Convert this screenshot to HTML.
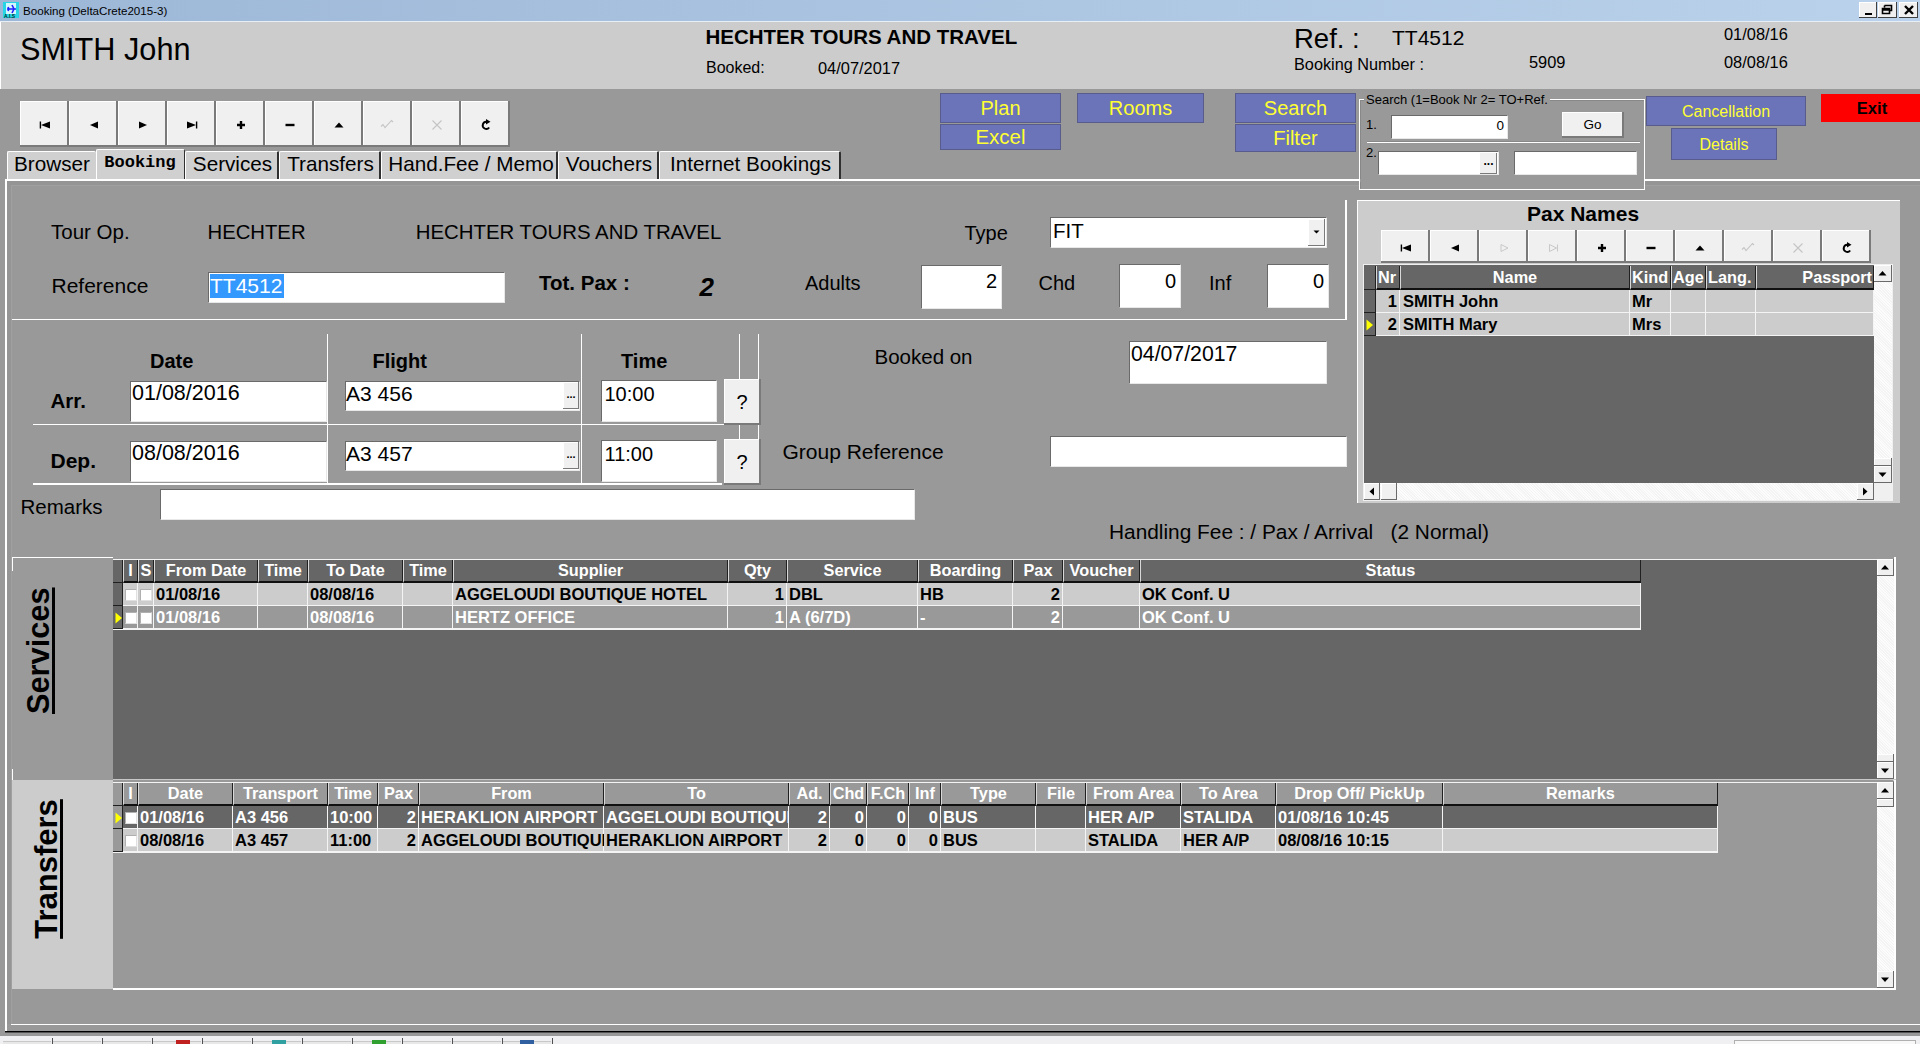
<!DOCTYPE html>
<html><head><meta charset="utf-8"><title>Booking</title>
<style>
html,body{margin:0;padding:0;width:1920px;height:1044px;overflow:hidden;background:#999;}
body>div,body>svg{position:absolute;}
body div div{position:absolute;}
</style></head><body>
<div style="left:0px;top:0px;width:1920px;height:1044px;background:#999999"></div>
<div style="left:0px;top:0px;width:1920px;height:21px;background:linear-gradient(to right,#9db7d7,#bad2eb)"></div>
<div style="left:0px;top:21px;width:1920px;height:1px;background:#e8eef6"></div>
<svg style="position:absolute;left:3px;top:2px" width="16" height="16" viewBox="0 0 16 16"><rect x="0" y="0" width="16" height="16" fill="#27d5e6"/><rect x="3" y="1" width="10" height="11" fill="#ffffff" opacity="0.8"/><path d="M4 7 L13 7 M9 3 L11 7 L9 11 M5 5 L6 7 L5 9" stroke="#2020ff" stroke-width="1.6" fill="none"/><text x="1" y="15.5" font-size="5" font-family="Liberation Sans" font-weight="700" fill="#003030">A.I.S</text></svg>
<div style="top:5.18px;font:400 11.6px/11.6px 'Liberation Sans',sans-serif;color:#000;white-space:pre;left:23px;">Booking (DeltaCrete2015-3)</div>
<div style="left:1859px;top:2px;width:18px;height:16px;background:#f0f0f0;border-right:1px solid #404040;border-bottom:1px solid #404040;box-sizing:border-box;box-shadow:inset 1px 1px 0 #fff"></div>
<div style="left:1878px;top:2px;width:19px;height:16px;background:#f0f0f0;border-right:1px solid #404040;border-bottom:1px solid #404040;box-sizing:border-box;box-shadow:inset 1px 1px 0 #fff"></div>
<div style="left:1899px;top:2px;width:19px;height:16px;background:#f0f0f0;border-right:1px solid #404040;border-bottom:1px solid #404040;box-sizing:border-box;box-shadow:inset 1px 1px 0 #fff"></div>
<div style="left:1864.5px;top:13px;width:7.0px;height:2px;background:#000"></div>
<svg style="position:absolute;left:1878px;top:2px" width="19" height="16" viewBox="0 0 19 16"><path d="M6.5 3.5h7v5h-2M6.5 3.5v2M4.5 6.5h7v5h-7z M4.5 6.5v1.5h7" stroke="#000" stroke-width="1.6" fill="none"/></svg>
<svg style="position:absolute;left:1899px;top:2px" width="20" height="16" viewBox="0 0 20 16"><path d="M6 4L14 12M14 4L6 12" stroke="#000" stroke-width="2.4"/></svg>
<div style="left:0px;top:22px;width:1920px;height:67px;background:#cccccc"></div>
<div style="left:0px;top:22px;width:1px;height:67px;background:#fff"></div>
<div style="top:35.01px;font:400 30.7px/30.7px 'Liberation Sans',sans-serif;color:#000;white-space:pre;left:20px;">SMITH John</div>
<div style="top:26.65px;font:700 20.5px/20.5px 'Liberation Sans',sans-serif;color:#000;white-space:pre;left:705.5px;">HECHTER TOURS AND TRAVEL</div>
<div style="top:60.46px;font:400 16px/16px 'Liberation Sans',sans-serif;color:#000;white-space:pre;left:706px;">Booked:</div>
<div style="top:60.12px;font:400 16.4px/16.4px 'Liberation Sans',sans-serif;color:#000;white-space:pre;left:818px;">04/07/2017</div>
<div style="top:24.72px;font:400 27.5px/27.5px 'Liberation Sans',sans-serif;color:#000;white-space:pre;left:1294px;">Ref. :</div>
<div style="top:26.72px;font:400 21px/21px 'Liberation Sans',sans-serif;color:#000;white-space:pre;left:1392px;">TT4512</div>
<div style="top:56.24px;font:400 16.25px/16.25px 'Liberation Sans',sans-serif;color:#000;white-space:pre;left:1294px;">Booking Number :</div>
<div style="top:54.12px;font:400 16.4px/16.4px 'Liberation Sans',sans-serif;color:#000;white-space:pre;left:1529px;">5909</div>
<div style="top:25.62px;font:400 16.4px/16.4px 'Liberation Sans',sans-serif;color:#000;white-space:pre;left:1724px;">01/08/16</div>
<div style="top:53.62px;font:400 16.4px/16.4px 'Liberation Sans',sans-serif;color:#000;white-space:pre;left:1724px;">08/08/16</div>
<div style="left:20px;top:101px;width:49px;height:46px;background:#f0f0f0;box-sizing:border-box;border-right:2px solid #7a7a7a;border-bottom:2px solid #7a7a7a;box-shadow:inset 1px 1px 0 #ffffff"></div>
<svg style="position:absolute;left:34.5px;top:114.5px" width="20" height="20" viewBox="-10 -10 20 20"><path d="M-4.6 -3.5v7" stroke="#000" stroke-width="1.4"/><path d="M-4 0L5 -3.6v7.2z" fill="#000"/></svg>
<div style="left:69px;top:101px;width:49px;height:46px;background:#f0f0f0;box-sizing:border-box;border-right:2px solid #7a7a7a;border-bottom:2px solid #7a7a7a;box-shadow:inset 1px 1px 0 #ffffff"></div>
<svg style="position:absolute;left:83.5px;top:114.5px" width="20" height="20" viewBox="-10 -10 20 20"><path d="M-4 0L4 -3.6v7.2z" fill="#000"/></svg>
<div style="left:118px;top:101px;width:49px;height:46px;background:#f0f0f0;box-sizing:border-box;border-right:2px solid #7a7a7a;border-bottom:2px solid #7a7a7a;box-shadow:inset 1px 1px 0 #ffffff"></div>
<svg style="position:absolute;left:132.5px;top:114.5px" width="20" height="20" viewBox="-10 -10 20 20"><path d="M4 0L-4 -3.6v7.2z" fill="#000"/></svg>
<div style="left:167px;top:101px;width:49px;height:46px;background:#f0f0f0;box-sizing:border-box;border-right:2px solid #7a7a7a;border-bottom:2px solid #7a7a7a;box-shadow:inset 1px 1px 0 #ffffff"></div>
<svg style="position:absolute;left:181.5px;top:114.5px" width="20" height="20" viewBox="-10 -10 20 20"><path d="M4.6 -3.5v7" stroke="#000" stroke-width="1.4"/><path d="M4 0L-5 -3.6v7.2z" fill="#000"/></svg>
<div style="left:216px;top:101px;width:49px;height:46px;background:#f0f0f0;box-sizing:border-box;border-right:2px solid #7a7a7a;border-bottom:2px solid #7a7a7a;box-shadow:inset 1px 1px 0 #ffffff"></div>
<svg style="position:absolute;left:230.5px;top:114.5px" width="20" height="20" viewBox="-10 -10 20 20"><path d="M-4 0h8M0 -4v8" stroke="#000" stroke-width="2.4"/></svg>
<div style="left:265px;top:101px;width:49px;height:46px;background:#f0f0f0;box-sizing:border-box;border-right:2px solid #7a7a7a;border-bottom:2px solid #7a7a7a;box-shadow:inset 1px 1px 0 #ffffff"></div>
<svg style="position:absolute;left:279.5px;top:114.5px" width="20" height="20" viewBox="-10 -10 20 20"><path d="M-4.5 0h9" stroke="#000" stroke-width="2.4"/></svg>
<div style="left:314px;top:101px;width:49px;height:46px;background:#f0f0f0;box-sizing:border-box;border-right:2px solid #7a7a7a;border-bottom:2px solid #7a7a7a;box-shadow:inset 1px 1px 0 #ffffff"></div>
<svg style="position:absolute;left:328.5px;top:114.5px" width="20" height="20" viewBox="-10 -10 20 20"><path d="M-4.5 2.5L0 -2.5L4.5 2.5z" fill="#000"/></svg>
<div style="left:363px;top:101px;width:49px;height:46px;background:#f0f0f0;box-sizing:border-box;border-right:2px solid #7a7a7a;border-bottom:2px solid #7a7a7a;box-shadow:inset 1px 1px 0 #ffffff"></div>
<svg style="position:absolute;left:377.5px;top:114.5px" width="20" height="20" viewBox="-10 -10 20 20"><path d="M-7 1.5L-5 -0.5L-3 2.5L3.5 -4.5L5 -3" stroke="#c4c4c4" stroke-width="1.1" fill="none"/></svg>
<div style="left:412px;top:101px;width:49px;height:46px;background:#f0f0f0;box-sizing:border-box;border-right:2px solid #7a7a7a;border-bottom:2px solid #7a7a7a;box-shadow:inset 1px 1px 0 #ffffff"></div>
<svg style="position:absolute;left:426.5px;top:114.5px" width="20" height="20" viewBox="-10 -10 20 20"><path d="M-4.5 -4.5L4.5 4.5M4.5 -4.5L-4.5 4.5" stroke="#c4c4c4" stroke-width="1.1"/></svg>
<div style="left:461px;top:101px;width:49px;height:46px;background:#f0f0f0;box-sizing:border-box;border-right:2px solid #7a7a7a;border-bottom:2px solid #7a7a7a;box-shadow:inset 1px 1px 0 #ffffff"></div>
<svg style="position:absolute;left:475.5px;top:114.5px" width="20" height="20" viewBox="-10 -10 20 20"><path d="M1 -3.2A3.6 3.6 0 1 0 3.2 2.5" stroke="#000" stroke-width="1.9" fill="none"/><path d="M0 -6L4.5 -3.2L0 -0.5z" fill="#000"/></svg>
<div style="left:940px;top:93px;width:121px;height:30px;background:#6b74b8;box-sizing:border-box;border:1px solid #585c8c"></div>
<div style="top:98.37px;font:400 20px/20px 'Liberation Sans',sans-serif;color:#ffff33;white-space:pre;left:500.5px;width:1000px;text-align:center;">Plan</div>
<div style="left:940px;top:124px;width:121px;height:26px;background:#6b74b8;box-sizing:border-box;border:1px solid #585c8c"></div>
<div style="top:126.65px;font:400 20.5px/20.5px 'Liberation Sans',sans-serif;color:#ffff33;white-space:pre;left:500.5px;width:1000px;text-align:center;">Excel</div>
<div style="left:1077px;top:93px;width:127px;height:30px;background:#6b74b8;box-sizing:border-box;border:1px solid #585c8c"></div>
<div style="top:98.37px;font:400 20px/20px 'Liberation Sans',sans-serif;color:#ffff33;white-space:pre;left:640.5px;width:1000px;text-align:center;">Rooms</div>
<div style="left:1235px;top:93px;width:121px;height:30px;background:#6b74b8;box-sizing:border-box;border:1px solid #585c8c"></div>
<div style="top:98.37px;font:400 20px/20px 'Liberation Sans',sans-serif;color:#ffff33;white-space:pre;left:795.5px;width:1000px;text-align:center;">Search</div>
<div style="left:1235px;top:124px;width:121px;height:28px;background:#6b74b8;box-sizing:border-box;border:1px solid #585c8c"></div>
<div style="top:128.07px;font:400 20px/20px 'Liberation Sans',sans-serif;color:#ffff33;white-space:pre;left:795.5px;width:1000px;text-align:center;">Filter</div>
<div style="left:1646px;top:96px;width:160px;height:30px;background:#6b74b8;box-sizing:border-box;border:1px solid #585c8c"></div>
<div style="top:104.46px;font:400 16px/16px 'Liberation Sans',sans-serif;color:#ffff33;white-space:pre;left:1226.0px;width:1000px;text-align:center;">Cancellation</div>
<div style="left:1671px;top:128px;width:106px;height:32px;background:#6b74b8;box-sizing:border-box;border:1px solid #585c8c"></div>
<div style="top:136.96px;font:400 16px/16px 'Liberation Sans',sans-serif;color:#ffff33;white-space:pre;left:1224.0px;width:1000px;text-align:center;">Details</div>
<div style="left:1821px;top:94px;width:99px;height:28px;background:#ff0000;box-sizing:border-box;border:1px solid #ff0000"></div>
<div style="top:100.03px;font:700 16.5px/16.5px 'Liberation Sans',sans-serif;color:#000;white-space:pre;left:1372.0px;width:1000px;text-align:center;">Exit</div>
<div style="left:1359px;top:99px;width:286px;height:91px;background:#999;box-sizing:border-box;border:1px solid #ffffff;box-shadow:inset 1px 1px 0 #888"></div>
<div style="left:1364px;top:92px;width:186px;height:14px;background:#999999"></div>
<div style="top:92.60px;font:400 13px/13px 'Liberation Sans',sans-serif;color:#000;white-space:pre;left:1366px;">Search (1=Book Nr 2= TO+Ref.</div>
<div style="top:117.50px;font:400 13px/13px 'Liberation Sans',sans-serif;color:#000;white-space:pre;left:1366px;">1.</div>
<div style="left:1391px;top:115px;width:117px;height:24px;background:#fff;box-sizing:border-box;border-top:1px solid #6a6a6a;border-left:1px solid #6a6a6a;border-bottom:1px solid #e8e8e8;border-right:1px solid #e8e8e8;"></div>
<div style="top:118.57px;font:400 13.5px/13.5px 'Liberation Sans',sans-serif;color:#000;white-space:pre;right:416px;">0</div>
<div style="left:1562px;top:112px;width:62px;height:26px;background:#f0f0f0;box-sizing:border-box;border-right:2px solid #7a7a7a;border-bottom:2px solid #7a7a7a;box-shadow:inset 1px 1px 0 #fff"></div>
<div style="top:117.57px;font:400 13.5px/13.5px 'Liberation Sans',sans-serif;color:#000;white-space:pre;left:1092.5px;width:1000px;text-align:center;">Go</div>
<div style="left:1367px;top:141px;width:273px;height:2px;background:#fff;border-top:1px solid #888;box-sizing:border-box"></div>
<div style="top:146.00px;font:400 13px/13px 'Liberation Sans',sans-serif;color:#000;white-space:pre;left:1366px;">2.</div>
<div style="left:1378px;top:151px;width:121px;height:24px;background:#fff;box-sizing:border-box;border-top:1px solid #6a6a6a;border-left:1px solid #6a6a6a;border-bottom:1px solid #e8e8e8;border-right:1px solid #e8e8e8;"></div>
<div style="left:1480px;top:153px;width:17px;height:21px;background:#f0f0f0;box-sizing:border-box;border-right:1px solid #7a7a7a;border-bottom:1px solid #7a7a7a"></div>
<div style="top:154.84px;font:700 12px/12px 'Liberation Sans',sans-serif;color:#000;white-space:pre;left:988.5px;width:1000px;text-align:center;">...</div>
<div style="left:1514px;top:151px;width:123px;height:24px;background:#fff;box-sizing:border-box;border-top:1px solid #6a6a6a;border-left:1px solid #6a6a6a;border-bottom:1px solid #e8e8e8;border-right:1px solid #e8e8e8;"></div>
<div style="left:7px;top:151px;width:89px;height:28px;background:#d0d0d0;box-sizing:border-box;border-top:1px solid #fff;border-left:1px solid #fff;border-radius:2px 2px 0 0"></div>
<div style="top:154.48px;font:400 20.7px/20.7px 'Liberation Sans',sans-serif;color:#000;white-space:pre;left:-448.0px;width:1000px;text-align:center;">Browser</div>
<div style="left:185px;top:151px;width:94px;height:28px;background:#d0d0d0;box-sizing:border-box;border-top:1px solid #fff;border-left:1px solid #fff;border-right:2px solid #303030;border-radius:2px 2px 0 0"></div>
<div style="top:154.48px;font:400 20.7px/20.7px 'Liberation Sans',sans-serif;color:#000;white-space:pre;left:-267.5px;width:1000px;text-align:center;">Services</div>
<div style="left:279px;top:151px;width:102px;height:28px;background:#d0d0d0;box-sizing:border-box;border-top:1px solid #fff;border-left:1px solid #fff;border-right:2px solid #303030;border-radius:2px 2px 0 0"></div>
<div style="top:154.48px;font:400 20.7px/20.7px 'Liberation Sans',sans-serif;color:#000;white-space:pre;left:-169.5px;width:1000px;text-align:center;">Transfers</div>
<div style="left:381px;top:151px;width:177px;height:28px;background:#d0d0d0;box-sizing:border-box;border-top:1px solid #fff;border-left:1px solid #fff;border-right:2px solid #303030;border-radius:2px 2px 0 0"></div>
<div style="top:154.48px;font:400 20.7px/20.7px 'Liberation Sans',sans-serif;color:#000;white-space:pre;left:-29.0px;width:1000px;text-align:center;">Hand.Fee / Memo</div>
<div style="left:558px;top:151px;width:101px;height:28px;background:#d0d0d0;box-sizing:border-box;border-top:1px solid #fff;border-left:1px solid #fff;border-right:2px solid #303030;border-radius:2px 2px 0 0"></div>
<div style="top:154.48px;font:400 20.7px/20.7px 'Liberation Sans',sans-serif;color:#000;white-space:pre;left:109.0px;width:1000px;text-align:center;">Vouchers</div>
<div style="left:659px;top:151px;width:182px;height:28px;background:#d0d0d0;box-sizing:border-box;border-top:1px solid #fff;border-left:1px solid #fff;border-right:2px solid #303030;border-radius:2px 2px 0 0"></div>
<div style="top:154.48px;font:400 20.7px/20.7px 'Liberation Sans',sans-serif;color:#000;white-space:pre;left:250.5px;width:1000px;text-align:center;">Internet Bookings</div>
<div style="left:96px;top:149px;width:89px;height:30px;background:#d0d0d0;box-sizing:border-box;border-top:1px solid #fff;border-left:1px solid #fff;border-right:1px solid #303030;border-radius:2px 2px 0 0"></div>
<div style="top:154.33px;font:700 17px/17px 'Liberation Mono',monospace;color:#000;white-space:pre;left:-360px;width:1000px;text-align:center;">Booking</div>
<div style="left:5px;top:179px;width:1915px;height:2px;background:#fff"></div>
<div style="left:1360px;top:179px;width:284px;height:3px;background:#999"></div>
<div style="left:5px;top:180px;width:2px;height:851px;background:#fff"></div>
<div style="left:7px;top:181px;width:1352px;height:4px;background:#959595"></div>
<div style="left:1645px;top:181px;width:275px;height:4px;background:#959595"></div>
<div style="left:7px;top:181px;width:4px;height:843px;background:#959595"></div>
<div style="left:11px;top:185px;width:1348px;height:1px;background:#a0a0a0"></div>
<div style="left:1645px;top:185px;width:275px;height:1px;background:#a0a0a0"></div>
<div style="left:11px;top:185px;width:1px;height:839px;background:#a0a0a0"></div>
<div style="left:1345px;top:200px;width:2px;height:120px;background:#fff"></div>
<div style="left:12px;top:319px;width:1335px;height:1px;background:#fff"></div>
<div style="top:221.65px;font:400 20.5px/20.5px 'Liberation Sans',sans-serif;color:#000;white-space:pre;left:51px;">Tour Op.</div>
<div style="top:221.82px;font:400 20.3px/20.3px 'Liberation Sans',sans-serif;color:#000;white-space:pre;left:207.5px;">HECHTER</div>
<div style="top:222.23px;font:400 20.4px/20.4px 'Liberation Sans',sans-serif;color:#000;white-space:pre;left:415.7px;">HECHTER TOURS AND TRAVEL</div>
<div style="top:223.07px;font:400 20px/20px 'Liberation Sans',sans-serif;color:#000;white-space:pre;left:964.5px;">Type</div>
<div style="left:1050px;top:217px;width:277px;height:31px;background:#fff;box-sizing:border-box;border-top:1px solid #6a6a6a;border-left:1px solid #6a6a6a;border-bottom:1px solid #e8e8e8;border-right:1px solid #e8e8e8;"></div>
<div style="left:1308px;top:219px;width:17px;height:27px;background:#f0f0f0;box-sizing:border-box;border-right:1px solid #7a7a7a;border-bottom:1px solid #7a7a7a;box-shadow:inset 1px 1px 0 #fff"></div>
<svg style="position:absolute;left:1312px;top:228px" width="10" height="8"><path d="M1.5 2.5h6L4.5 5.5z" fill="#000"/></svg>
<div style="top:220.65px;font:400 20.5px/20.5px 'Liberation Sans',sans-serif;color:#000;white-space:pre;left:1053px;">FIT</div>
<div style="top:275.22px;font:400 21px/21px 'Liberation Sans',sans-serif;color:#000;white-space:pre;left:51.5px;">Reference</div>
<div style="left:208px;top:272px;width:297px;height:31px;background:#fff;box-sizing:border-box;border-top:1px solid #6a6a6a;border-left:1px solid #6a6a6a;border-bottom:1px solid #e8e8e8;border-right:1px solid #e8e8e8;"></div>
<div style="left:210px;top:274px;width:74px;height:24px;background:#3399ff"></div>
<div style="top:274.72px;font:400 21px/21px 'Liberation Sans',sans-serif;color:#fff;white-space:pre;left:210px;">TT4512</div>
<div style="top:272.65px;font:700 20.5px/20.5px 'Liberation Sans',sans-serif;color:#000;white-space:pre;left:539px;">Tot. Pax :</div>
<div style="top:274.49px;font:700 26px/26px 'Liberation Sans',sans-serif;color:#000;white-space:pre;left:699.5px;font-style:italic;">2</div>
<div style="top:273.07px;font:400 20px/20px 'Liberation Sans',sans-serif;color:#000;white-space:pre;left:805px;">Adults</div>
<div style="left:921px;top:265px;width:81px;height:44px;background:#fff;box-sizing:border-box;border-top:1px solid #6a6a6a;border-left:1px solid #6a6a6a;border-bottom:1px solid #e8e8e8;border-right:1px solid #e8e8e8;"></div>
<div style="top:270.57px;font:400 20px/20px 'Liberation Sans',sans-serif;color:#000;white-space:pre;right:923px;">2</div>
<div style="top:273.07px;font:400 20px/20px 'Liberation Sans',sans-serif;color:#000;white-space:pre;left:1038.5px;">Chd</div>
<div style="left:1119px;top:264px;width:62px;height:44px;background:#fff;box-sizing:border-box;border-top:1px solid #6a6a6a;border-left:1px solid #6a6a6a;border-bottom:1px solid #e8e8e8;border-right:1px solid #e8e8e8;"></div>
<div style="top:270.57px;font:400 20px/20px 'Liberation Sans',sans-serif;color:#000;white-space:pre;right:744px;">0</div>
<div style="top:273.07px;font:400 20px/20px 'Liberation Sans',sans-serif;color:#000;white-space:pre;left:1209px;">Inf</div>
<div style="left:1267px;top:264px;width:62px;height:44px;background:#fff;box-sizing:border-box;border-top:1px solid #6a6a6a;border-left:1px solid #6a6a6a;border-bottom:1px solid #e8e8e8;border-right:1px solid #e8e8e8;"></div>
<div style="top:270.57px;font:400 20px/20px 'Liberation Sans',sans-serif;color:#000;white-space:pre;right:596px;">0</div>
<div style="left:327px;top:334px;width:1px;height:151px;background:#fff"></div>
<div style="left:581px;top:334px;width:1px;height:151px;background:#fff"></div>
<div style="left:739px;top:334px;width:1px;height:46px;background:#fff"></div>
<div style="left:739px;top:424px;width:1px;height:16px;background:#fff"></div>
<div style="left:758px;top:334px;width:1px;height:46px;background:#fff"></div>
<div style="left:758px;top:424px;width:1px;height:16px;background:#fff"></div>
<div style="left:33px;top:424px;width:707px;height:1px;background:#fff"></div>
<div style="left:33px;top:483px;width:689px;height:2px;background:#fff"></div>
<div style="top:351.07px;font:700 20px/20px 'Liberation Sans',sans-serif;color:#000;white-space:pre;left:150px;">Date</div>
<div style="top:351.07px;font:700 20px/20px 'Liberation Sans',sans-serif;color:#000;white-space:pre;left:372.5px;">Flight</div>
<div style="top:351.07px;font:700 20px/20px 'Liberation Sans',sans-serif;color:#000;white-space:pre;left:621px;">Time</div>
<div style="top:390.65px;font:700 20.5px/20.5px 'Liberation Sans',sans-serif;color:#000;white-space:pre;left:50.5px;">Arr.</div>
<div style="top:450.22px;font:700 21px/21px 'Liberation Sans',sans-serif;color:#000;white-space:pre;left:50.5px;">Dep.</div>
<div style="left:130px;top:381px;width:197px;height:41px;background:#fff;box-sizing:border-box;border-top:1px solid #6a6a6a;border-left:1px solid #6a6a6a;border-bottom:1px solid #e8e8e8;border-right:1px solid #e8e8e8;"></div>
<div style="top:382.80px;font:400 21.5px/21.5px 'Liberation Sans',sans-serif;color:#000;white-space:pre;left:132px;">01/08/2016</div>
<div style="left:130px;top:441px;width:197px;height:41px;background:#fff;box-sizing:border-box;border-top:1px solid #6a6a6a;border-left:1px solid #6a6a6a;border-bottom:1px solid #e8e8e8;border-right:1px solid #e8e8e8;"></div>
<div style="top:442.80px;font:400 21.5px/21.5px 'Liberation Sans',sans-serif;color:#000;white-space:pre;left:132px;">08/08/2016</div>
<div style="left:345px;top:381px;width:235px;height:30px;background:#fff;box-sizing:border-box;border-top:1px solid #6a6a6a;border-left:1px solid #6a6a6a;border-bottom:1px solid #e8e8e8;border-right:1px solid #e8e8e8;"></div>
<div style="left:563px;top:382px;width:16px;height:27px;background:#f0f0f0;box-sizing:border-box;border-right:1px solid #7a7a7a;border-bottom:1px solid #7a7a7a;box-shadow:inset 1px 1px 0 #fff"></div>
<div style="top:389.19px;font:700 11px/11px 'Liberation Sans',sans-serif;color:#000;white-space:pre;left:71.0px;width:1000px;text-align:center;">...</div>
<div style="top:383.22px;font:400 21px/21px 'Liberation Sans',sans-serif;color:#000;white-space:pre;left:346px;">A3 456</div>
<div style="left:345px;top:441px;width:235px;height:30px;background:#fff;box-sizing:border-box;border-top:1px solid #6a6a6a;border-left:1px solid #6a6a6a;border-bottom:1px solid #e8e8e8;border-right:1px solid #e8e8e8;"></div>
<div style="left:563px;top:442px;width:16px;height:27px;background:#f0f0f0;box-sizing:border-box;border-right:1px solid #7a7a7a;border-bottom:1px solid #7a7a7a;box-shadow:inset 1px 1px 0 #fff"></div>
<div style="top:449.19px;font:700 11px/11px 'Liberation Sans',sans-serif;color:#000;white-space:pre;left:71.0px;width:1000px;text-align:center;">...</div>
<div style="top:443.22px;font:400 21px/21px 'Liberation Sans',sans-serif;color:#000;white-space:pre;left:346px;">A3 457</div>
<div style="left:601px;top:380px;width:116px;height:42px;background:#fff;box-sizing:border-box;border-top:1px solid #6a6a6a;border-left:1px solid #6a6a6a;border-bottom:1px solid #e8e8e8;border-right:1px solid #e8e8e8;"></div>
<div style="top:384.07px;font:400 20px/20px 'Liberation Sans',sans-serif;color:#000;white-space:pre;left:604.5px;">10:00</div>
<div style="left:601px;top:440px;width:116px;height:42px;background:#fff;box-sizing:border-box;border-top:1px solid #6a6a6a;border-left:1px solid #6a6a6a;border-bottom:1px solid #e8e8e8;border-right:1px solid #e8e8e8;"></div>
<div style="top:444.07px;font:400 20px/20px 'Liberation Sans',sans-serif;color:#000;white-space:pre;left:604.5px;">11:00</div>
<div style="left:724px;top:379px;width:37px;height:46px;background:#f0f0f0;box-sizing:border-box;border-right:2px solid #7a7a7a;border-bottom:2px solid #7a7a7a;box-shadow:inset 1px 1px 0 #fff"></div>
<div style="top:391.57px;font:400 20px/20px 'Liberation Sans',sans-serif;color:#000;white-space:pre;left:242.0px;width:1000px;text-align:center;">?</div>
<div style="left:724px;top:439px;width:37px;height:46px;background:#f0f0f0;box-sizing:border-box;border-right:2px solid #7a7a7a;border-bottom:2px solid #7a7a7a;box-shadow:inset 1px 1px 0 #fff"></div>
<div style="top:451.57px;font:400 20px/20px 'Liberation Sans',sans-serif;color:#000;white-space:pre;left:242.0px;width:1000px;text-align:center;">?</div>
<div style="top:347.15px;font:400 20.5px/20.5px 'Liberation Sans',sans-serif;color:#000;white-space:pre;left:874.5px;">Booked on</div>
<div style="left:1129px;top:341px;width:198px;height:43px;background:#fff;box-sizing:border-box;border-top:1px solid #6a6a6a;border-left:1px solid #6a6a6a;border-bottom:1px solid #e8e8e8;border-right:1px solid #e8e8e8;"></div>
<div style="top:344.01px;font:400 21.25px/21.25px 'Liberation Sans',sans-serif;color:#000;white-space:pre;left:1131px;">04/07/2017</div>
<div style="top:441.22px;font:400 21px/21px 'Liberation Sans',sans-serif;color:#000;white-space:pre;left:782.5px;">Group Reference</div>
<div style="left:1050px;top:436px;width:297px;height:31px;background:#fff;box-sizing:border-box;border-top:1px solid #6a6a6a;border-left:1px solid #6a6a6a;border-bottom:1px solid #e8e8e8;border-right:1px solid #e8e8e8;"></div>
<div style="top:496.65px;font:400 20.5px/20.5px 'Liberation Sans',sans-serif;color:#000;white-space:pre;left:20.5px;">Remarks</div>
<div style="left:160px;top:489px;width:755px;height:31px;background:#fff;box-sizing:border-box;border-top:1px solid #6a6a6a;border-left:1px solid #6a6a6a;border-bottom:1px solid #e8e8e8;border-right:1px solid #e8e8e8;"></div>
<div style="top:522.35px;font:400 20.85px/20.85px 'Liberation Sans',sans-serif;color:#000;white-space:pre;left:1109px;">Handling Fee : / Pax / Arrival   (2 Normal)</div>
<div style="left:1357px;top:200px;width:543px;height:303px;background:#cccccc;box-sizing:border-box;border-top:1px solid #fff;border-left:1px solid #fff"></div>
<div style="top:203.22px;font:700 21px/21px 'Liberation Sans',sans-serif;color:#000;white-space:pre;left:1527px;">Pax Names</div>
<div style="left:1381px;top:230px;width:49px;height:33px;background:#f0f0f0;box-sizing:border-box;border-right:2px solid #7a7a7a;border-bottom:2px solid #7a7a7a;box-shadow:inset 1px 1px 0 #ffffff"></div>
<svg style="position:absolute;left:1395.5px;top:237.5px" width="20" height="20" viewBox="-10 -10 20 20"><path d="M-4.6 -3.5v7" stroke="#000" stroke-width="1.4"/><path d="M-4 0L5 -3.6v7.2z" fill="#000"/></svg>
<div style="left:1430px;top:230px;width:49px;height:33px;background:#f0f0f0;box-sizing:border-box;border-right:2px solid #7a7a7a;border-bottom:2px solid #7a7a7a;box-shadow:inset 1px 1px 0 #ffffff"></div>
<svg style="position:absolute;left:1444.5px;top:237.5px" width="20" height="20" viewBox="-10 -10 20 20"><path d="M-4 0L4 -3.6v7.2z" fill="#000"/></svg>
<div style="left:1479px;top:230px;width:49px;height:33px;background:#f0f0f0;box-sizing:border-box;border-right:2px solid #7a7a7a;border-bottom:2px solid #7a7a7a;box-shadow:inset 1px 1px 0 #ffffff"></div>
<svg style="position:absolute;left:1493.5px;top:237.5px" width="20" height="20" viewBox="-10 -10 20 20"><path d="M4 0L-3 -3.5v7z" stroke="#c8c8c8" stroke-width="1" fill="none"/></svg>
<div style="left:1528px;top:230px;width:49px;height:33px;background:#f0f0f0;box-sizing:border-box;border-right:2px solid #7a7a7a;border-bottom:2px solid #7a7a7a;box-shadow:inset 1px 1px 0 #ffffff"></div>
<svg style="position:absolute;left:1542.5px;top:237.5px" width="20" height="20" viewBox="-10 -10 20 20"><path d="M4.5 -3.5v7M3.5 0L-3.5 -3.5v7z" stroke="#c8c8c8" stroke-width="1" fill="none"/></svg>
<div style="left:1577px;top:230px;width:49px;height:33px;background:#f0f0f0;box-sizing:border-box;border-right:2px solid #7a7a7a;border-bottom:2px solid #7a7a7a;box-shadow:inset 1px 1px 0 #ffffff"></div>
<svg style="position:absolute;left:1591.5px;top:237.5px" width="20" height="20" viewBox="-10 -10 20 20"><path d="M-4 0h8M0 -4v8" stroke="#000" stroke-width="2.4"/></svg>
<div style="left:1626px;top:230px;width:49px;height:33px;background:#f0f0f0;box-sizing:border-box;border-right:2px solid #7a7a7a;border-bottom:2px solid #7a7a7a;box-shadow:inset 1px 1px 0 #ffffff"></div>
<svg style="position:absolute;left:1640.5px;top:237.5px" width="20" height="20" viewBox="-10 -10 20 20"><path d="M-4.5 0h9" stroke="#000" stroke-width="2.4"/></svg>
<div style="left:1675px;top:230px;width:49px;height:33px;background:#f0f0f0;box-sizing:border-box;border-right:2px solid #7a7a7a;border-bottom:2px solid #7a7a7a;box-shadow:inset 1px 1px 0 #ffffff"></div>
<svg style="position:absolute;left:1689.5px;top:237.5px" width="20" height="20" viewBox="-10 -10 20 20"><path d="M-4.5 2.5L0 -2.5L4.5 2.5z" fill="#000"/></svg>
<div style="left:1724px;top:230px;width:49px;height:33px;background:#f0f0f0;box-sizing:border-box;border-right:2px solid #7a7a7a;border-bottom:2px solid #7a7a7a;box-shadow:inset 1px 1px 0 #ffffff"></div>
<svg style="position:absolute;left:1738.5px;top:237.5px" width="20" height="20" viewBox="-10 -10 20 20"><path d="M-7 1.5L-5 -0.5L-3 2.5L3.5 -4.5L5 -3" stroke="#c4c4c4" stroke-width="1.1" fill="none"/></svg>
<div style="left:1773px;top:230px;width:49px;height:33px;background:#f0f0f0;box-sizing:border-box;border-right:2px solid #7a7a7a;border-bottom:2px solid #7a7a7a;box-shadow:inset 1px 1px 0 #ffffff"></div>
<svg style="position:absolute;left:1787.5px;top:237.5px" width="20" height="20" viewBox="-10 -10 20 20"><path d="M-4.5 -4.5L4.5 4.5M4.5 -4.5L-4.5 4.5" stroke="#c4c4c4" stroke-width="1.1"/></svg>
<div style="left:1822px;top:230px;width:49px;height:33px;background:#f0f0f0;box-sizing:border-box;border-right:2px solid #7a7a7a;border-bottom:2px solid #7a7a7a;box-shadow:inset 1px 1px 0 #ffffff"></div>
<svg style="position:absolute;left:1836.5px;top:237.5px" width="20" height="20" viewBox="-10 -10 20 20"><path d="M1 -3.2A3.6 3.6 0 1 0 3.2 2.5" stroke="#000" stroke-width="1.9" fill="none"/><path d="M0 -6L4.5 -3.2L0 -0.5z" fill="#000"/></svg>
<div style="left:1363px;top:264px;width:530px;height:237px;background:#666666;box-sizing:border-box;border:1px solid #f0f0f0"></div>
<div style="left:1364px;top:266px;width:12px;height:24px;background:#666666;box-sizing:border-box;border-right:1px solid #202020;border-bottom:1px solid #202020"></div>
<div style="left:1376px;top:266px;width:24px;height:24px;background:#666666;box-sizing:border-box;border-left:1px solid #d8d8d8;border-right:1px solid #202020;border-bottom:2px solid #101010"></div>
<div style="top:269.20px;font:700 16.3px/16.3px 'Liberation Sans',sans-serif;color:#fff;white-space:pre;left:1378px;">Nr</div>
<div style="left:1400px;top:266px;width:230px;height:24px;background:#666666;box-sizing:border-box;border-left:1px solid #d8d8d8;border-right:1px solid #202020;border-bottom:2px solid #101010"></div>
<div style="top:269.20px;font:700 16.3px/16.3px 'Liberation Sans',sans-serif;color:#fff;white-space:pre;left:1015.0px;width:1000px;text-align:center;">Name</div>
<div style="left:1630px;top:266px;width:41px;height:24px;background:#666666;box-sizing:border-box;border-left:1px solid #d8d8d8;border-right:1px solid #202020;border-bottom:2px solid #101010"></div>
<div style="top:269.20px;font:700 16.3px/16.3px 'Liberation Sans',sans-serif;color:#fff;white-space:pre;left:1632px;">Kind</div>
<div style="left:1671px;top:266px;width:35px;height:24px;background:#666666;box-sizing:border-box;border-left:1px solid #d8d8d8;border-right:1px solid #202020;border-bottom:2px solid #101010"></div>
<div style="top:269.20px;font:700 16.3px/16.3px 'Liberation Sans',sans-serif;color:#fff;white-space:pre;left:1673px;">Age</div>
<div style="left:1706px;top:266px;width:50px;height:24px;background:#666666;box-sizing:border-box;border-left:1px solid #d8d8d8;border-right:1px solid #202020;border-bottom:2px solid #101010"></div>
<div style="top:269.20px;font:700 16.3px/16.3px 'Liberation Sans',sans-serif;color:#fff;white-space:pre;left:1708px;">Lang.</div>
<div style="left:1756px;top:266px;width:118px;height:24px;background:#666666;box-sizing:border-box;border-left:1px solid #d8d8d8;border-right:1px solid #202020;border-bottom:2px solid #101010"></div>
<div style="top:269.20px;font:700 16.3px/16.3px 'Liberation Sans',sans-serif;color:#fff;white-space:pre;right:48px;">Passport</div>
<div style="left:1364px;top:290px;width:12px;height:23px;background:#666666;box-sizing:border-box;border-right:1px solid #202020;border-bottom:1px solid #202020"></div>
<div style="left:1376px;top:290px;width:24px;height:23px;background:#cccccc;box-sizing:border-box;border-right:1px solid #f4f4f4;border-bottom:1px solid #f4f4f4"></div>
<div style="top:292.73px;font:700 16.5px/16.5px 'Liberation Sans',sans-serif;color:#000;white-space:pre;right:523px;">1</div>
<div style="left:1400px;top:290px;width:230px;height:23px;background:#cccccc;box-sizing:border-box;border-right:1px solid #f4f4f4;border-bottom:1px solid #f4f4f4"></div>
<div style="top:292.73px;font:700 16.5px/16.5px 'Liberation Sans',sans-serif;color:#000;white-space:pre;left:1403px;">SMITH John</div>
<div style="left:1630px;top:290px;width:41px;height:23px;background:#cccccc;box-sizing:border-box;border-right:1px solid #f4f4f4;border-bottom:1px solid #f4f4f4"></div>
<div style="top:292.73px;font:700 16.5px/16.5px 'Liberation Sans',sans-serif;color:#000;white-space:pre;left:1632px;">Mr</div>
<div style="left:1671px;top:290px;width:35px;height:23px;background:#cccccc;box-sizing:border-box;border-right:1px solid #f4f4f4;border-bottom:1px solid #f4f4f4"></div>
<div style="left:1706px;top:290px;width:50px;height:23px;background:#cccccc;box-sizing:border-box;border-right:1px solid #f4f4f4;border-bottom:1px solid #f4f4f4"></div>
<div style="left:1756px;top:290px;width:118px;height:23px;background:#cccccc;box-sizing:border-box;border-right:1px solid #f4f4f4;border-bottom:1px solid #f4f4f4"></div>
<div style="left:1364px;top:313px;width:12px;height:23px;background:#666666;box-sizing:border-box;border-right:1px solid #202020;border-bottom:1px solid #202020"></div>
<svg style="position:absolute;left:1365px;top:318.5px" width="9" height="12"><path d="M1.5 0.5L8 6L1.5 11.5z" fill="#ffff00"/></svg>
<div style="left:1376px;top:313px;width:24px;height:23px;background:#cccccc;box-sizing:border-box;border-right:1px solid #f4f4f4;border-bottom:1px solid #f4f4f4"></div>
<div style="top:315.73px;font:700 16.5px/16.5px 'Liberation Sans',sans-serif;color:#000;white-space:pre;right:523px;">2</div>
<div style="left:1400px;top:313px;width:230px;height:23px;background:#cccccc;box-sizing:border-box;border-right:1px solid #f4f4f4;border-bottom:1px solid #f4f4f4"></div>
<div style="top:315.73px;font:700 16.5px/16.5px 'Liberation Sans',sans-serif;color:#000;white-space:pre;left:1403px;">SMITH Mary</div>
<div style="left:1630px;top:313px;width:41px;height:23px;background:#cccccc;box-sizing:border-box;border-right:1px solid #f4f4f4;border-bottom:1px solid #f4f4f4"></div>
<div style="top:315.73px;font:700 16.5px/16.5px 'Liberation Sans',sans-serif;color:#000;white-space:pre;left:1632px;">Mrs</div>
<div style="left:1671px;top:313px;width:35px;height:23px;background:#cccccc;box-sizing:border-box;border-right:1px solid #f4f4f4;border-bottom:1px solid #f4f4f4"></div>
<div style="left:1706px;top:313px;width:50px;height:23px;background:#cccccc;box-sizing:border-box;border-right:1px solid #f4f4f4;border-bottom:1px solid #f4f4f4"></div>
<div style="left:1756px;top:313px;width:118px;height:23px;background:#cccccc;box-sizing:border-box;border-right:1px solid #f4f4f4;border-bottom:1px solid #f4f4f4"></div>
<div style="left:1874px;top:265px;width:18px;height:218px;background:repeating-linear-gradient(45deg,#f4f4f4 0 1px,#fcfcfc 1px 2px)"></div>
<div style="left:1874px;top:265px;width:18px;height:17px;background:#f0f0f0;box-sizing:border-box;border-right:1px solid #6a6a6a;border-bottom:1px solid #6a6a6a;box-shadow:inset 1px 1px 0 #fff"></div>
<svg style="position:absolute;left:1874px;top:265px" width="18" height="17"><path d="M4.5 10.5h8L8.5 6z" fill="#000"/></svg>
<div style="left:1874px;top:466px;width:18px;height:17px;background:#f0f0f0;box-sizing:border-box;border-right:1px solid #6a6a6a;border-bottom:1px solid #6a6a6a;box-shadow:inset 1px 1px 0 #fff"></div>
<svg style="position:absolute;left:1874px;top:466px" width="18" height="17"><path d="M4.5 6.5h8L8.5 11z" fill="#000"/></svg>
<div style="left:1874px;top:458px;width:18px;height:8px;background:#f0f0f0;box-sizing:border-box;border-right:1px solid #6a6a6a;border-bottom:1px solid #6a6a6a;box-shadow:inset 1px 1px 0 #fff"></div>
<div style="left:1364px;top:483px;width:510px;height:17px;background:repeating-linear-gradient(45deg,#f4f4f4 0 1px,#fcfcfc 1px 2px)"></div>
<div style="left:1364px;top:483px;width:16px;height:17px;background:#f0f0f0;box-sizing:border-box;border-right:1px solid #6a6a6a;border-bottom:1px solid #6a6a6a;box-shadow:inset 1px 1px 0 #fff"></div>
<svg style="position:absolute;left:1364px;top:483px" width="16" height="17"><path d="M10 4.5v8L5.5 8.5z" fill="#000"/></svg>
<div style="left:1381px;top:483px;width:16px;height:17px;background:#f0f0f0;box-sizing:border-box;border-right:1px solid #6a6a6a;border-bottom:1px solid #6a6a6a;box-shadow:inset 1px 1px 0 #fff"></div>
<div style="left:1857px;top:483px;width:17px;height:17px;background:#f0f0f0;box-sizing:border-box;border-right:1px solid #6a6a6a;border-bottom:1px solid #6a6a6a;box-shadow:inset 1px 1px 0 #fff"></div>
<svg style="position:absolute;left:1857px;top:483px" width="17" height="17"><path d="M6 4.5v8L10.5 8.5z" fill="#000"/></svg>
<div style="left:1874px;top:483px;width:18px;height:17px;background:#f0f0f0"></div>
<div style="left:12px;top:557px;width:101px;height:224px;background:#9a9a9a;box-sizing:border-box;border-top:1px solid #fff"></div>
<div style="left:12px;top:557px;width:1px;height:14px;background:#fff"></div>
<div style="left:12px;top:769px;width:1px;height:11px;background:#fff"></div>
<div style="left:-22px;top:637.5px;width:122px;height:30px;transform:rotate(-90deg);font:700 30.75px/30px 'Liberation Sans',sans-serif;text-decoration:underline;text-decoration-thickness:3px;text-underline-offset:3px;white-space:pre;color:#000;text-align:center">Services</div>
<div style="left:113px;top:559px;width:1780px;height:220px;background:#666666"></div>
<div style="left:113px;top:559px;width:10px;height:24px;background:#666666;box-sizing:border-box;border-right:1px solid #202020;border-bottom:1px solid #202020"></div>
<div style="left:123px;top:559px;width:15px;height:24px;background:#666666;box-sizing:border-box;border-left:1px solid #d8d8d8;border-right:1px solid #202020;border-bottom:2px solid #101010"></div>
<div style="top:561.70px;font:700 16.3px/16.3px 'Liberation Sans',sans-serif;color:#fff;white-space:pre;left:-369.5px;width:1000px;text-align:center;">I</div>
<div style="left:138px;top:559px;width:16px;height:24px;background:#666666;box-sizing:border-box;border-left:1px solid #d8d8d8;border-right:1px solid #202020;border-bottom:2px solid #101010"></div>
<div style="top:561.70px;font:700 16.3px/16.3px 'Liberation Sans',sans-serif;color:#fff;white-space:pre;left:-354.0px;width:1000px;text-align:center;">S</div>
<div style="left:154px;top:559px;width:104px;height:24px;background:#666666;box-sizing:border-box;border-left:1px solid #d8d8d8;border-right:1px solid #202020;border-bottom:2px solid #101010"></div>
<div style="top:561.70px;font:700 16.3px/16.3px 'Liberation Sans',sans-serif;color:#fff;white-space:pre;left:-294.0px;width:1000px;text-align:center;">From Date</div>
<div style="left:258px;top:559px;width:50px;height:24px;background:#666666;box-sizing:border-box;border-left:1px solid #d8d8d8;border-right:1px solid #202020;border-bottom:2px solid #101010"></div>
<div style="top:561.70px;font:700 16.3px/16.3px 'Liberation Sans',sans-serif;color:#fff;white-space:pre;left:-217.0px;width:1000px;text-align:center;">Time</div>
<div style="left:308px;top:559px;width:95px;height:24px;background:#666666;box-sizing:border-box;border-left:1px solid #d8d8d8;border-right:1px solid #202020;border-bottom:2px solid #101010"></div>
<div style="top:561.70px;font:700 16.3px/16.3px 'Liberation Sans',sans-serif;color:#fff;white-space:pre;left:-144.5px;width:1000px;text-align:center;">To Date</div>
<div style="left:403px;top:559px;width:50px;height:24px;background:#666666;box-sizing:border-box;border-left:1px solid #d8d8d8;border-right:1px solid #202020;border-bottom:2px solid #101010"></div>
<div style="top:561.70px;font:700 16.3px/16.3px 'Liberation Sans',sans-serif;color:#fff;white-space:pre;left:-72.0px;width:1000px;text-align:center;">Time</div>
<div style="left:453px;top:559px;width:275px;height:24px;background:#666666;box-sizing:border-box;border-left:1px solid #d8d8d8;border-right:1px solid #202020;border-bottom:2px solid #101010"></div>
<div style="top:561.70px;font:700 16.3px/16.3px 'Liberation Sans',sans-serif;color:#fff;white-space:pre;left:90.5px;width:1000px;text-align:center;">Supplier</div>
<div style="left:728px;top:559px;width:59px;height:24px;background:#666666;box-sizing:border-box;border-left:1px solid #d8d8d8;border-right:1px solid #202020;border-bottom:2px solid #101010"></div>
<div style="top:561.70px;font:700 16.3px/16.3px 'Liberation Sans',sans-serif;color:#fff;white-space:pre;left:257.5px;width:1000px;text-align:center;">Qty</div>
<div style="left:787px;top:559px;width:131px;height:24px;background:#666666;box-sizing:border-box;border-left:1px solid #d8d8d8;border-right:1px solid #202020;border-bottom:2px solid #101010"></div>
<div style="top:561.70px;font:700 16.3px/16.3px 'Liberation Sans',sans-serif;color:#fff;white-space:pre;left:352.5px;width:1000px;text-align:center;">Service</div>
<div style="left:918px;top:559px;width:95px;height:24px;background:#666666;box-sizing:border-box;border-left:1px solid #d8d8d8;border-right:1px solid #202020;border-bottom:2px solid #101010"></div>
<div style="top:561.70px;font:700 16.3px/16.3px 'Liberation Sans',sans-serif;color:#fff;white-space:pre;left:465.5px;width:1000px;text-align:center;">Boarding</div>
<div style="left:1013px;top:559px;width:50px;height:24px;background:#666666;box-sizing:border-box;border-left:1px solid #d8d8d8;border-right:1px solid #202020;border-bottom:2px solid #101010"></div>
<div style="top:561.70px;font:700 16.3px/16.3px 'Liberation Sans',sans-serif;color:#fff;white-space:pre;left:538.0px;width:1000px;text-align:center;">Pax</div>
<div style="left:1063px;top:559px;width:77px;height:24px;background:#666666;box-sizing:border-box;border-left:1px solid #d8d8d8;border-right:1px solid #202020;border-bottom:2px solid #101010"></div>
<div style="top:561.70px;font:700 16.3px/16.3px 'Liberation Sans',sans-serif;color:#fff;white-space:pre;left:601.5px;width:1000px;text-align:center;">Voucher</div>
<div style="left:1140px;top:559px;width:501px;height:24px;background:#666666;box-sizing:border-box;border-left:1px solid #d8d8d8;border-right:1px solid #202020;border-bottom:2px solid #101010"></div>
<div style="top:561.70px;font:700 16.3px/16.3px 'Liberation Sans',sans-serif;color:#fff;white-space:pre;left:890.5px;width:1000px;text-align:center;">Status</div>
<div style="left:113px;top:583px;width:10px;height:23px;background:#666666;box-sizing:border-box;border-right:1px solid #202020;border-bottom:1px solid #202020"></div>
<div style="left:123px;top:583px;width:15px;height:23px;background:#cccccc;box-sizing:border-box;border-right:1px solid #f4f4f4;border-bottom:1px solid #f4f4f4"></div>
<div style="left:124.5px;top:588.5px;width:12.0px;height:12.0px;background:#fff;box-sizing:border-box;border-top:1px solid #b0b0b0;border-left:1px solid #b0b0b0;border-right:1px solid #e0e0e0;border-bottom:1px solid #e0e0e0"></div>
<div style="left:138px;top:583px;width:16px;height:23px;background:#cccccc;box-sizing:border-box;border-right:1px solid #f4f4f4;border-bottom:1px solid #f4f4f4"></div>
<div style="left:140.0px;top:588.5px;width:12.0px;height:12.0px;background:#fff;box-sizing:border-box;border-top:1px solid #b0b0b0;border-left:1px solid #b0b0b0;border-right:1px solid #e0e0e0;border-bottom:1px solid #e0e0e0"></div>
<div style="left:154px;top:583px;width:104px;height:23px;background:#cccccc;box-sizing:border-box;border-right:1px solid #f4f4f4;border-bottom:1px solid #f4f4f4"></div>
<div style="top:585.53px;font:700 16.5px/16.5px 'Liberation Sans',sans-serif;color:#000;white-space:pre;left:156px;">01/08/16</div>
<div style="left:258px;top:583px;width:50px;height:23px;background:#cccccc;box-sizing:border-box;border-right:1px solid #f4f4f4;border-bottom:1px solid #f4f4f4"></div>
<div style="left:308px;top:583px;width:95px;height:23px;background:#cccccc;box-sizing:border-box;border-right:1px solid #f4f4f4;border-bottom:1px solid #f4f4f4"></div>
<div style="top:585.53px;font:700 16.5px/16.5px 'Liberation Sans',sans-serif;color:#000;white-space:pre;left:310px;">08/08/16</div>
<div style="left:403px;top:583px;width:50px;height:23px;background:#cccccc;box-sizing:border-box;border-right:1px solid #f4f4f4;border-bottom:1px solid #f4f4f4"></div>
<div style="left:453px;top:583px;width:275px;height:23px;background:#cccccc;box-sizing:border-box;border-right:1px solid #f4f4f4;border-bottom:1px solid #f4f4f4"></div>
<div style="top:585.53px;font:700 16.5px/16.5px 'Liberation Sans',sans-serif;color:#000;white-space:pre;left:455px;">AGGELOUDI BOUTIQUE HOTEL</div>
<div style="left:728px;top:583px;width:59px;height:23px;background:#cccccc;box-sizing:border-box;border-right:1px solid #f4f4f4;border-bottom:1px solid #f4f4f4"></div>
<div style="top:585.53px;font:700 16.5px/16.5px 'Liberation Sans',sans-serif;color:#000;white-space:pre;right:1136px;">1</div>
<div style="left:787px;top:583px;width:131px;height:23px;background:#cccccc;box-sizing:border-box;border-right:1px solid #f4f4f4;border-bottom:1px solid #f4f4f4"></div>
<div style="top:585.53px;font:700 16.5px/16.5px 'Liberation Sans',sans-serif;color:#000;white-space:pre;left:789px;">DBL</div>
<div style="left:918px;top:583px;width:95px;height:23px;background:#cccccc;box-sizing:border-box;border-right:1px solid #f4f4f4;border-bottom:1px solid #f4f4f4"></div>
<div style="top:585.53px;font:700 16.5px/16.5px 'Liberation Sans',sans-serif;color:#000;white-space:pre;left:920px;">HB</div>
<div style="left:1013px;top:583px;width:50px;height:23px;background:#cccccc;box-sizing:border-box;border-right:1px solid #f4f4f4;border-bottom:1px solid #f4f4f4"></div>
<div style="top:585.53px;font:700 16.5px/16.5px 'Liberation Sans',sans-serif;color:#000;white-space:pre;right:860px;">2</div>
<div style="left:1063px;top:583px;width:77px;height:23px;background:#cccccc;box-sizing:border-box;border-right:1px solid #f4f4f4;border-bottom:1px solid #f4f4f4"></div>
<div style="left:1140px;top:583px;width:501px;height:23px;background:#cccccc;box-sizing:border-box;border-right:1px solid #f4f4f4;border-bottom:1px solid #f4f4f4"></div>
<div style="top:585.53px;font:700 16.5px/16.5px 'Liberation Sans',sans-serif;color:#000;white-space:pre;left:1142px;">OK Conf. U</div>
<div style="left:113px;top:606px;width:10px;height:23px;background:#666666;box-sizing:border-box;border-right:1px solid #202020;border-bottom:1px solid #202020"></div>
<svg style="position:absolute;left:114px;top:611.5px" width="9" height="12"><path d="M1.5 0.5L8 6L1.5 11.5z" fill="#ffff00"/></svg>
<div style="left:123px;top:606px;width:15px;height:23px;background:#999999;box-sizing:border-box;border-right:1px solid #f4f4f4;border-bottom:1px solid #f4f4f4"></div>
<div style="left:124.5px;top:611.5px;width:12.0px;height:12.0px;background:#fff;box-sizing:border-box;border-top:1px solid #b0b0b0;border-left:1px solid #b0b0b0;border-right:1px solid #e0e0e0;border-bottom:1px solid #e0e0e0"></div>
<div style="left:138px;top:606px;width:16px;height:23px;background:#999999;box-sizing:border-box;border-right:1px solid #f4f4f4;border-bottom:1px solid #f4f4f4"></div>
<div style="left:140.0px;top:611.5px;width:12.0px;height:12.0px;background:#fff;box-sizing:border-box;border-top:1px solid #b0b0b0;border-left:1px solid #b0b0b0;border-right:1px solid #e0e0e0;border-bottom:1px solid #e0e0e0"></div>
<div style="left:154px;top:606px;width:104px;height:23px;background:#999999;box-sizing:border-box;border-right:1px solid #f4f4f4;border-bottom:1px solid #f4f4f4"></div>
<div style="top:608.53px;font:700 16.5px/16.5px 'Liberation Sans',sans-serif;color:#fff;white-space:pre;left:156px;">01/08/16</div>
<div style="left:258px;top:606px;width:50px;height:23px;background:#999999;box-sizing:border-box;border-right:1px solid #f4f4f4;border-bottom:1px solid #f4f4f4"></div>
<div style="left:308px;top:606px;width:95px;height:23px;background:#999999;box-sizing:border-box;border-right:1px solid #f4f4f4;border-bottom:1px solid #f4f4f4"></div>
<div style="top:608.53px;font:700 16.5px/16.5px 'Liberation Sans',sans-serif;color:#fff;white-space:pre;left:310px;">08/08/16</div>
<div style="left:403px;top:606px;width:50px;height:23px;background:#999999;box-sizing:border-box;border-right:1px solid #f4f4f4;border-bottom:1px solid #f4f4f4"></div>
<div style="left:453px;top:606px;width:275px;height:23px;background:#999999;box-sizing:border-box;border-right:1px solid #f4f4f4;border-bottom:1px solid #f4f4f4"></div>
<div style="top:608.53px;font:700 16.5px/16.5px 'Liberation Sans',sans-serif;color:#fff;white-space:pre;left:455px;">HERTZ OFFICE</div>
<div style="left:728px;top:606px;width:59px;height:23px;background:#999999;box-sizing:border-box;border-right:1px solid #f4f4f4;border-bottom:1px solid #f4f4f4"></div>
<div style="top:608.53px;font:700 16.5px/16.5px 'Liberation Sans',sans-serif;color:#fff;white-space:pre;right:1136px;">1</div>
<div style="left:787px;top:606px;width:131px;height:23px;background:#999999;box-sizing:border-box;border-right:1px solid #f4f4f4;border-bottom:1px solid #f4f4f4"></div>
<div style="top:608.53px;font:700 16.5px/16.5px 'Liberation Sans',sans-serif;color:#fff;white-space:pre;left:789px;">A (6/7D)</div>
<div style="left:918px;top:606px;width:95px;height:23px;background:#999999;box-sizing:border-box;border-right:1px solid #f4f4f4;border-bottom:1px solid #f4f4f4"></div>
<div style="top:608.53px;font:700 16.5px/16.5px 'Liberation Sans',sans-serif;color:#fff;white-space:pre;left:920px;">-</div>
<div style="left:1013px;top:606px;width:50px;height:23px;background:#999999;box-sizing:border-box;border-right:1px solid #f4f4f4;border-bottom:1px solid #f4f4f4"></div>
<div style="top:608.53px;font:700 16.5px/16.5px 'Liberation Sans',sans-serif;color:#fff;white-space:pre;right:860px;">2</div>
<div style="left:1063px;top:606px;width:77px;height:23px;background:#999999;box-sizing:border-box;border-right:1px solid #f4f4f4;border-bottom:1px solid #f4f4f4"></div>
<div style="left:1140px;top:606px;width:501px;height:23px;background:#999999;box-sizing:border-box;border-right:1px solid #f4f4f4;border-bottom:1px solid #f4f4f4"></div>
<div style="top:608.53px;font:700 16.5px/16.5px 'Liberation Sans',sans-serif;color:#fff;white-space:pre;left:1142px;">OK Conf. U</div>
<div style="left:113px;top:629px;width:1528px;height:1px;background:#f4f4f4"></div>
<div style="left:113px;top:559px;width:1764px;height:1px;background:#f4f4f4"></div>
<div style="left:1877px;top:559px;width:17px;height:220px;background:repeating-linear-gradient(45deg,#f4f4f4 0 1px,#fcfcfc 1px 2px)"></div>
<div style="left:1877px;top:559px;width:17px;height:17px;background:#f0f0f0;box-sizing:border-box;border-right:1px solid #6a6a6a;border-bottom:1px solid #6a6a6a;box-shadow:inset 1px 1px 0 #fff"></div>
<svg style="position:absolute;left:1877px;top:559px" width="17" height="17"><path d="M4.0 10.5h8L8.0 6z" fill="#000"/></svg>
<div style="left:1877px;top:762px;width:17px;height:17px;background:#f0f0f0;box-sizing:border-box;border-right:1px solid #6a6a6a;border-bottom:1px solid #6a6a6a;box-shadow:inset 1px 1px 0 #fff"></div>
<svg style="position:absolute;left:1877px;top:762px" width="17" height="17"><path d="M4.0 6.5h8L8.0 11z" fill="#000"/></svg>
<div style="left:1877px;top:754px;width:17px;height:8px;background:#f0f0f0;box-sizing:border-box;border-right:1px solid #6a6a6a;border-bottom:1px solid #6a6a6a;box-shadow:inset 1px 1px 0 #fff"></div>
<div style="left:1894px;top:557px;width:2px;height:224px;background:#fff"></div>
<div style="left:113px;top:779px;width:1783px;height:2px;background:#c8c8c8"></div>
<div style="left:113px;top:781px;width:1783px;height:1px;background:#888"></div>
<div style="left:12px;top:780px;width:101px;height:209px;background:#cccccc"></div>
<div style="left:-23px;top:854px;width:140px;height:30px;transform:rotate(-90deg);font:700 31px/30px 'Liberation Sans',sans-serif;text-decoration:underline;text-decoration-thickness:3px;text-underline-offset:3px;white-space:pre;color:#000;text-align:center">Transfers</div>
<div style="left:113px;top:780px;width:1780px;height:208px;background:#999999"></div>
<div style="left:113px;top:782px;width:10px;height:24px;background:#999999;box-sizing:border-box;border-right:1px solid #202020;border-bottom:1px solid #202020"></div>
<div style="left:123px;top:782px;width:15px;height:24px;background:#999999;box-sizing:border-box;border-left:1px solid #d8d8d8;border-right:1px solid #202020;border-bottom:2px solid #101010"></div>
<div style="top:784.90px;font:700 16.3px/16.3px 'Liberation Sans',sans-serif;color:#fff;white-space:pre;left:-369.5px;width:1000px;text-align:center;">I</div>
<div style="left:138px;top:782px;width:95px;height:24px;background:#999999;box-sizing:border-box;border-left:1px solid #d8d8d8;border-right:1px solid #202020;border-bottom:2px solid #101010"></div>
<div style="top:784.90px;font:700 16.3px/16.3px 'Liberation Sans',sans-serif;color:#fff;white-space:pre;left:-314.5px;width:1000px;text-align:center;">Date</div>
<div style="left:233px;top:782px;width:95px;height:24px;background:#999999;box-sizing:border-box;border-left:1px solid #d8d8d8;border-right:1px solid #202020;border-bottom:2px solid #101010"></div>
<div style="top:784.90px;font:700 16.3px/16.3px 'Liberation Sans',sans-serif;color:#fff;white-space:pre;left:-219.5px;width:1000px;text-align:center;">Transport</div>
<div style="left:328px;top:782px;width:50px;height:24px;background:#999999;box-sizing:border-box;border-left:1px solid #d8d8d8;border-right:1px solid #202020;border-bottom:2px solid #101010"></div>
<div style="top:784.90px;font:700 16.3px/16.3px 'Liberation Sans',sans-serif;color:#fff;white-space:pre;left:-147.0px;width:1000px;text-align:center;">Time</div>
<div style="left:378px;top:782px;width:41px;height:24px;background:#999999;box-sizing:border-box;border-left:1px solid #d8d8d8;border-right:1px solid #202020;border-bottom:2px solid #101010"></div>
<div style="top:784.90px;font:700 16.3px/16.3px 'Liberation Sans',sans-serif;color:#fff;white-space:pre;left:-101.5px;width:1000px;text-align:center;">Pax</div>
<div style="left:419px;top:782px;width:185px;height:24px;background:#999999;box-sizing:border-box;border-left:1px solid #d8d8d8;border-right:1px solid #202020;border-bottom:2px solid #101010"></div>
<div style="top:784.90px;font:700 16.3px/16.3px 'Liberation Sans',sans-serif;color:#fff;white-space:pre;left:11.5px;width:1000px;text-align:center;">From</div>
<div style="left:604px;top:782px;width:185px;height:24px;background:#999999;box-sizing:border-box;border-left:1px solid #d8d8d8;border-right:1px solid #202020;border-bottom:2px solid #101010"></div>
<div style="top:784.90px;font:700 16.3px/16.3px 'Liberation Sans',sans-serif;color:#fff;white-space:pre;left:196.5px;width:1000px;text-align:center;">To</div>
<div style="left:789px;top:782px;width:41px;height:24px;background:#999999;box-sizing:border-box;border-left:1px solid #d8d8d8;border-right:1px solid #202020;border-bottom:2px solid #101010"></div>
<div style="top:784.90px;font:700 16.3px/16.3px 'Liberation Sans',sans-serif;color:#fff;white-space:pre;left:309.5px;width:1000px;text-align:center;">Ad.</div>
<div style="left:830px;top:782px;width:37px;height:24px;background:#999999;box-sizing:border-box;border-left:1px solid #d8d8d8;border-right:1px solid #202020;border-bottom:2px solid #101010"></div>
<div style="top:784.90px;font:700 16.3px/16.3px 'Liberation Sans',sans-serif;color:#fff;white-space:pre;left:348.5px;width:1000px;text-align:center;">Chd</div>
<div style="left:867px;top:782px;width:42px;height:24px;background:#999999;box-sizing:border-box;border-left:1px solid #d8d8d8;border-right:1px solid #202020;border-bottom:2px solid #101010"></div>
<div style="top:784.90px;font:700 16.3px/16.3px 'Liberation Sans',sans-serif;color:#fff;white-space:pre;left:388.0px;width:1000px;text-align:center;">F.Ch</div>
<div style="left:909px;top:782px;width:32px;height:24px;background:#999999;box-sizing:border-box;border-left:1px solid #d8d8d8;border-right:1px solid #202020;border-bottom:2px solid #101010"></div>
<div style="top:784.90px;font:700 16.3px/16.3px 'Liberation Sans',sans-serif;color:#fff;white-space:pre;left:425.0px;width:1000px;text-align:center;">Inf</div>
<div style="left:941px;top:782px;width:95px;height:24px;background:#999999;box-sizing:border-box;border-left:1px solid #d8d8d8;border-right:1px solid #202020;border-bottom:2px solid #101010"></div>
<div style="top:784.90px;font:700 16.3px/16.3px 'Liberation Sans',sans-serif;color:#fff;white-space:pre;left:488.5px;width:1000px;text-align:center;">Type</div>
<div style="left:1036px;top:782px;width:50px;height:24px;background:#999999;box-sizing:border-box;border-left:1px solid #d8d8d8;border-right:1px solid #202020;border-bottom:2px solid #101010"></div>
<div style="top:784.90px;font:700 16.3px/16.3px 'Liberation Sans',sans-serif;color:#fff;white-space:pre;left:561.0px;width:1000px;text-align:center;">File</div>
<div style="left:1086px;top:782px;width:95px;height:24px;background:#999999;box-sizing:border-box;border-left:1px solid #d8d8d8;border-right:1px solid #202020;border-bottom:2px solid #101010"></div>
<div style="top:784.90px;font:700 16.3px/16.3px 'Liberation Sans',sans-serif;color:#fff;white-space:pre;left:633.5px;width:1000px;text-align:center;">From Area</div>
<div style="left:1181px;top:782px;width:95px;height:24px;background:#999999;box-sizing:border-box;border-left:1px solid #d8d8d8;border-right:1px solid #202020;border-bottom:2px solid #101010"></div>
<div style="top:784.90px;font:700 16.3px/16.3px 'Liberation Sans',sans-serif;color:#fff;white-space:pre;left:728.5px;width:1000px;text-align:center;">To Area</div>
<div style="left:1276px;top:782px;width:167px;height:24px;background:#999999;box-sizing:border-box;border-left:1px solid #d8d8d8;border-right:1px solid #202020;border-bottom:2px solid #101010"></div>
<div style="top:784.90px;font:700 16.3px/16.3px 'Liberation Sans',sans-serif;color:#fff;white-space:pre;left:859.5px;width:1000px;text-align:center;">Drop Off/ PickUp</div>
<div style="left:1443px;top:782px;width:275px;height:24px;background:#999999;box-sizing:border-box;border-left:1px solid #d8d8d8;border-right:1px solid #202020;border-bottom:2px solid #101010"></div>
<div style="top:784.90px;font:700 16.3px/16.3px 'Liberation Sans',sans-serif;color:#fff;white-space:pre;left:1080.5px;width:1000px;text-align:center;">Remarks</div>
<div style="left:113px;top:806px;width:10px;height:23px;background:#999999;box-sizing:border-box;border-right:1px solid #202020;border-bottom:1px solid #202020"></div>
<svg style="position:absolute;left:114px;top:811.5px" width="9" height="12"><path d="M1.5 0.5L8 6L1.5 11.5z" fill="#ffff00"/></svg>
<div style="left:123px;top:806px;width:15px;height:23px;background:#666666;box-sizing:border-box;border-right:1px solid #f4f4f4;border-bottom:1px solid #f4f4f4"></div>
<div style="left:124.5px;top:811.5px;width:12.0px;height:12.0px;background:#fff;box-sizing:border-box;border-top:1px solid #b0b0b0;border-left:1px solid #b0b0b0;border-right:1px solid #e0e0e0;border-bottom:1px solid #e0e0e0"></div>
<div style="left:138px;top:806px;width:95px;height:23px;overflow:hidden">
<div style="left:0;top:0;width:95px;height:23px;background:#666666;box-sizing:border-box;border-right:1px solid #f4f4f4;border-bottom:1px solid #f4f4f4"></div>
<div style="left:2px;top:3.33px;font:700 16.5px/16.5px 'Liberation Sans',sans-serif;color:#fff;white-space:pre">01/08/16</div>
</div>
<div style="left:233px;top:806px;width:95px;height:23px;overflow:hidden">
<div style="left:0;top:0;width:95px;height:23px;background:#666666;box-sizing:border-box;border-right:1px solid #f4f4f4;border-bottom:1px solid #f4f4f4"></div>
<div style="left:2px;top:3.33px;font:700 16.5px/16.5px 'Liberation Sans',sans-serif;color:#fff;white-space:pre">A3 456</div>
</div>
<div style="left:328px;top:806px;width:50px;height:23px;overflow:hidden">
<div style="left:0;top:0;width:50px;height:23px;background:#666666;box-sizing:border-box;border-right:1px solid #f4f4f4;border-bottom:1px solid #f4f4f4"></div>
<div style="left:2px;top:3.33px;font:700 16.5px/16.5px 'Liberation Sans',sans-serif;color:#fff;white-space:pre">10:00</div>
</div>
<div style="left:378px;top:806px;width:41px;height:23px;overflow:hidden">
<div style="left:0;top:0;width:41px;height:23px;background:#666666;box-sizing:border-box;border-right:1px solid #f4f4f4;border-bottom:1px solid #f4f4f4"></div>
<div style="right:3px;top:3.33px;font:700 16.5px/16.5px 'Liberation Sans',sans-serif;color:#fff;white-space:pre">2</div>
</div>
<div style="left:419px;top:806px;width:185px;height:23px;overflow:hidden">
<div style="left:0;top:0;width:185px;height:23px;background:#666666;box-sizing:border-box;border-right:1px solid #f4f4f4;border-bottom:1px solid #f4f4f4"></div>
<div style="left:2px;top:3.33px;font:700 16.5px/16.5px 'Liberation Sans',sans-serif;color:#fff;white-space:pre">HERAKLION AIRPORT</div>
</div>
<div style="left:604px;top:806px;width:185px;height:23px;overflow:hidden">
<div style="left:0;top:0;width:185px;height:23px;background:#666666;box-sizing:border-box;border-right:1px solid #f4f4f4;border-bottom:1px solid #f4f4f4"></div>
<div style="left:2px;top:3.33px;font:700 16.5px/16.5px 'Liberation Sans',sans-serif;color:#fff;white-space:pre">AGGELOUDI BOUTIQUE</div>
</div>
<div style="left:789px;top:806px;width:41px;height:23px;overflow:hidden">
<div style="left:0;top:0;width:41px;height:23px;background:#666666;box-sizing:border-box;border-right:1px solid #f4f4f4;border-bottom:1px solid #f4f4f4"></div>
<div style="right:3px;top:3.33px;font:700 16.5px/16.5px 'Liberation Sans',sans-serif;color:#fff;white-space:pre">2</div>
</div>
<div style="left:830px;top:806px;width:37px;height:23px;overflow:hidden">
<div style="left:0;top:0;width:37px;height:23px;background:#666666;box-sizing:border-box;border-right:1px solid #f4f4f4;border-bottom:1px solid #f4f4f4"></div>
<div style="right:3px;top:3.33px;font:700 16.5px/16.5px 'Liberation Sans',sans-serif;color:#fff;white-space:pre">0</div>
</div>
<div style="left:867px;top:806px;width:42px;height:23px;overflow:hidden">
<div style="left:0;top:0;width:42px;height:23px;background:#666666;box-sizing:border-box;border-right:1px solid #f4f4f4;border-bottom:1px solid #f4f4f4"></div>
<div style="right:3px;top:3.33px;font:700 16.5px/16.5px 'Liberation Sans',sans-serif;color:#fff;white-space:pre">0</div>
</div>
<div style="left:909px;top:806px;width:32px;height:23px;overflow:hidden">
<div style="left:0;top:0;width:32px;height:23px;background:#666666;box-sizing:border-box;border-right:1px solid #f4f4f4;border-bottom:1px solid #f4f4f4"></div>
<div style="right:3px;top:3.33px;font:700 16.5px/16.5px 'Liberation Sans',sans-serif;color:#fff;white-space:pre">0</div>
</div>
<div style="left:941px;top:806px;width:95px;height:23px;overflow:hidden">
<div style="left:0;top:0;width:95px;height:23px;background:#666666;box-sizing:border-box;border-right:1px solid #f4f4f4;border-bottom:1px solid #f4f4f4"></div>
<div style="left:2px;top:3.33px;font:700 16.5px/16.5px 'Liberation Sans',sans-serif;color:#fff;white-space:pre">BUS</div>
</div>
<div style="left:1036px;top:806px;width:50px;height:23px;overflow:hidden">
<div style="left:0;top:0;width:50px;height:23px;background:#666666;box-sizing:border-box;border-right:1px solid #f4f4f4;border-bottom:1px solid #f4f4f4"></div>
</div>
<div style="left:1086px;top:806px;width:95px;height:23px;overflow:hidden">
<div style="left:0;top:0;width:95px;height:23px;background:#666666;box-sizing:border-box;border-right:1px solid #f4f4f4;border-bottom:1px solid #f4f4f4"></div>
<div style="left:2px;top:3.33px;font:700 16.5px/16.5px 'Liberation Sans',sans-serif;color:#fff;white-space:pre">HER A/P</div>
</div>
<div style="left:1181px;top:806px;width:95px;height:23px;overflow:hidden">
<div style="left:0;top:0;width:95px;height:23px;background:#666666;box-sizing:border-box;border-right:1px solid #f4f4f4;border-bottom:1px solid #f4f4f4"></div>
<div style="left:2px;top:3.33px;font:700 16.5px/16.5px 'Liberation Sans',sans-serif;color:#fff;white-space:pre">STALIDA</div>
</div>
<div style="left:1276px;top:806px;width:167px;height:23px;overflow:hidden">
<div style="left:0;top:0;width:167px;height:23px;background:#666666;box-sizing:border-box;border-right:1px solid #f4f4f4;border-bottom:1px solid #f4f4f4"></div>
<div style="left:2px;top:3.33px;font:700 16.5px/16.5px 'Liberation Sans',sans-serif;color:#fff;white-space:pre">01/08/16 10:45</div>
</div>
<div style="left:1443px;top:806px;width:275px;height:23px;overflow:hidden">
<div style="left:0;top:0;width:275px;height:23px;background:#666666;box-sizing:border-box;border-right:1px solid #f4f4f4;border-bottom:1px solid #f4f4f4"></div>
</div>
<div style="left:113px;top:829px;width:10px;height:23px;background:#999999;box-sizing:border-box;border-right:1px solid #202020;border-bottom:1px solid #202020"></div>
<div style="left:123px;top:829px;width:15px;height:23px;background:#cccccc;box-sizing:border-box;border-right:1px solid #f4f4f4;border-bottom:1px solid #f4f4f4"></div>
<div style="left:124.5px;top:834.5px;width:12.0px;height:12.0px;background:#fff;box-sizing:border-box;border-top:1px solid #b0b0b0;border-left:1px solid #b0b0b0;border-right:1px solid #e0e0e0;border-bottom:1px solid #e0e0e0"></div>
<div style="left:138px;top:829px;width:95px;height:23px;overflow:hidden">
<div style="left:0;top:0;width:95px;height:23px;background:#cccccc;box-sizing:border-box;border-right:1px solid #f4f4f4;border-bottom:1px solid #f4f4f4"></div>
<div style="left:2px;top:3.33px;font:700 16.5px/16.5px 'Liberation Sans',sans-serif;color:#000;white-space:pre">08/08/16</div>
</div>
<div style="left:233px;top:829px;width:95px;height:23px;overflow:hidden">
<div style="left:0;top:0;width:95px;height:23px;background:#cccccc;box-sizing:border-box;border-right:1px solid #f4f4f4;border-bottom:1px solid #f4f4f4"></div>
<div style="left:2px;top:3.33px;font:700 16.5px/16.5px 'Liberation Sans',sans-serif;color:#000;white-space:pre">A3 457</div>
</div>
<div style="left:328px;top:829px;width:50px;height:23px;overflow:hidden">
<div style="left:0;top:0;width:50px;height:23px;background:#cccccc;box-sizing:border-box;border-right:1px solid #f4f4f4;border-bottom:1px solid #f4f4f4"></div>
<div style="left:2px;top:3.33px;font:700 16.5px/16.5px 'Liberation Sans',sans-serif;color:#000;white-space:pre">11:00</div>
</div>
<div style="left:378px;top:829px;width:41px;height:23px;overflow:hidden">
<div style="left:0;top:0;width:41px;height:23px;background:#cccccc;box-sizing:border-box;border-right:1px solid #f4f4f4;border-bottom:1px solid #f4f4f4"></div>
<div style="right:3px;top:3.33px;font:700 16.5px/16.5px 'Liberation Sans',sans-serif;color:#000;white-space:pre">2</div>
</div>
<div style="left:419px;top:829px;width:185px;height:23px;overflow:hidden">
<div style="left:0;top:0;width:185px;height:23px;background:#cccccc;box-sizing:border-box;border-right:1px solid #f4f4f4;border-bottom:1px solid #f4f4f4"></div>
<div style="left:2px;top:3.33px;font:700 16.5px/16.5px 'Liberation Sans',sans-serif;color:#000;white-space:pre">AGGELOUDI BOUTIQUE</div>
</div>
<div style="left:604px;top:829px;width:185px;height:23px;overflow:hidden">
<div style="left:0;top:0;width:185px;height:23px;background:#cccccc;box-sizing:border-box;border-right:1px solid #f4f4f4;border-bottom:1px solid #f4f4f4"></div>
<div style="left:2px;top:3.33px;font:700 16.5px/16.5px 'Liberation Sans',sans-serif;color:#000;white-space:pre">HERAKLION AIRPORT</div>
</div>
<div style="left:789px;top:829px;width:41px;height:23px;overflow:hidden">
<div style="left:0;top:0;width:41px;height:23px;background:#cccccc;box-sizing:border-box;border-right:1px solid #f4f4f4;border-bottom:1px solid #f4f4f4"></div>
<div style="right:3px;top:3.33px;font:700 16.5px/16.5px 'Liberation Sans',sans-serif;color:#000;white-space:pre">2</div>
</div>
<div style="left:830px;top:829px;width:37px;height:23px;overflow:hidden">
<div style="left:0;top:0;width:37px;height:23px;background:#cccccc;box-sizing:border-box;border-right:1px solid #f4f4f4;border-bottom:1px solid #f4f4f4"></div>
<div style="right:3px;top:3.33px;font:700 16.5px/16.5px 'Liberation Sans',sans-serif;color:#000;white-space:pre">0</div>
</div>
<div style="left:867px;top:829px;width:42px;height:23px;overflow:hidden">
<div style="left:0;top:0;width:42px;height:23px;background:#cccccc;box-sizing:border-box;border-right:1px solid #f4f4f4;border-bottom:1px solid #f4f4f4"></div>
<div style="right:3px;top:3.33px;font:700 16.5px/16.5px 'Liberation Sans',sans-serif;color:#000;white-space:pre">0</div>
</div>
<div style="left:909px;top:829px;width:32px;height:23px;overflow:hidden">
<div style="left:0;top:0;width:32px;height:23px;background:#cccccc;box-sizing:border-box;border-right:1px solid #f4f4f4;border-bottom:1px solid #f4f4f4"></div>
<div style="right:3px;top:3.33px;font:700 16.5px/16.5px 'Liberation Sans',sans-serif;color:#000;white-space:pre">0</div>
</div>
<div style="left:941px;top:829px;width:95px;height:23px;overflow:hidden">
<div style="left:0;top:0;width:95px;height:23px;background:#cccccc;box-sizing:border-box;border-right:1px solid #f4f4f4;border-bottom:1px solid #f4f4f4"></div>
<div style="left:2px;top:3.33px;font:700 16.5px/16.5px 'Liberation Sans',sans-serif;color:#000;white-space:pre">BUS</div>
</div>
<div style="left:1036px;top:829px;width:50px;height:23px;overflow:hidden">
<div style="left:0;top:0;width:50px;height:23px;background:#cccccc;box-sizing:border-box;border-right:1px solid #f4f4f4;border-bottom:1px solid #f4f4f4"></div>
</div>
<div style="left:1086px;top:829px;width:95px;height:23px;overflow:hidden">
<div style="left:0;top:0;width:95px;height:23px;background:#cccccc;box-sizing:border-box;border-right:1px solid #f4f4f4;border-bottom:1px solid #f4f4f4"></div>
<div style="left:2px;top:3.33px;font:700 16.5px/16.5px 'Liberation Sans',sans-serif;color:#000;white-space:pre">STALIDA</div>
</div>
<div style="left:1181px;top:829px;width:95px;height:23px;overflow:hidden">
<div style="left:0;top:0;width:95px;height:23px;background:#cccccc;box-sizing:border-box;border-right:1px solid #f4f4f4;border-bottom:1px solid #f4f4f4"></div>
<div style="left:2px;top:3.33px;font:700 16.5px/16.5px 'Liberation Sans',sans-serif;color:#000;white-space:pre">HER A/P</div>
</div>
<div style="left:1276px;top:829px;width:167px;height:23px;overflow:hidden">
<div style="left:0;top:0;width:167px;height:23px;background:#cccccc;box-sizing:border-box;border-right:1px solid #f4f4f4;border-bottom:1px solid #f4f4f4"></div>
<div style="left:2px;top:3.33px;font:700 16.5px/16.5px 'Liberation Sans',sans-serif;color:#000;white-space:pre">08/08/16 10:15</div>
</div>
<div style="left:1443px;top:829px;width:275px;height:23px;overflow:hidden">
<div style="left:0;top:0;width:275px;height:23px;background:#cccccc;box-sizing:border-box;border-right:1px solid #f4f4f4;border-bottom:1px solid #f4f4f4"></div>
</div>
<div style="left:113px;top:852px;width:1605px;height:1px;background:#f4f4f4"></div>
<div style="left:113px;top:782px;width:1764px;height:1px;background:#f4f4f4"></div>
<div style="left:1877px;top:782px;width:17px;height:206px;background:repeating-linear-gradient(45deg,#f4f4f4 0 1px,#fcfcfc 1px 2px)"></div>
<div style="left:1877px;top:782px;width:17px;height:17px;background:#f0f0f0;box-sizing:border-box;border-right:1px solid #6a6a6a;border-bottom:1px solid #6a6a6a;box-shadow:inset 1px 1px 0 #fff"></div>
<svg style="position:absolute;left:1877px;top:782px" width="17" height="17"><path d="M4.0 10.5h8L8.0 6z" fill="#000"/></svg>
<div style="left:1877px;top:971px;width:17px;height:17px;background:#f0f0f0;box-sizing:border-box;border-right:1px solid #6a6a6a;border-bottom:1px solid #6a6a6a;box-shadow:inset 1px 1px 0 #fff"></div>
<svg style="position:absolute;left:1877px;top:971px" width="17" height="17"><path d="M4.0 6.5h8L8.0 11z" fill="#000"/></svg>
<div style="left:1877px;top:799px;width:17px;height:8px;background:#f0f0f0;box-sizing:border-box;border-right:1px solid #6a6a6a;border-bottom:1px solid #6a6a6a;box-shadow:inset 1px 1px 0 #fff"></div>
<div style="left:1894px;top:780px;width:2px;height:209px;background:#fff"></div>
<div style="left:113px;top:988px;width:1783px;height:2px;background:#fff"></div>
<div style="left:11px;top:1024px;width:1909px;height:1px;background:#fff"></div>
<div style="left:5px;top:1031px;width:1915px;height:1px;background:#000"></div>
<div style="left:5px;top:1032px;width:1915px;height:1px;background:#555"></div>
<div style="left:0px;top:1036px;width:1920px;height:8px;background:#f0f0f2"></div>
<div style="left:3px;top:1041px;width:48px;height:3px;background:#e8e8e8;border-top:1px solid #c8c8c8;box-sizing:border-box"></div>
<div style="left:52px;top:1038px;width:1px;height:6px;background:#505050"></div>
<div style="left:53px;top:1041px;width:48px;height:3px;background:#e8e8e8;border-top:1px solid #c8c8c8;box-sizing:border-box"></div>
<div style="left:102px;top:1038px;width:1px;height:6px;background:#505050"></div>
<div style="left:103px;top:1041px;width:48px;height:3px;background:#e8e8e8;border-top:1px solid #c8c8c8;box-sizing:border-box"></div>
<div style="left:152px;top:1038px;width:1px;height:6px;background:#505050"></div>
<div style="left:153px;top:1041px;width:48px;height:3px;background:#e8e8e8;border-top:1px solid #c8c8c8;box-sizing:border-box"></div>
<div style="left:202px;top:1038px;width:1px;height:6px;background:#505050"></div>
<div style="left:203px;top:1041px;width:48px;height:3px;background:#e8e8e8;border-top:1px solid #c8c8c8;box-sizing:border-box"></div>
<div style="left:252px;top:1038px;width:1px;height:6px;background:#505050"></div>
<div style="left:253px;top:1041px;width:48px;height:3px;background:#e8e8e8;border-top:1px solid #c8c8c8;box-sizing:border-box"></div>
<div style="left:302px;top:1038px;width:1px;height:6px;background:#505050"></div>
<div style="left:303px;top:1041px;width:48px;height:3px;background:#e8e8e8;border-top:1px solid #c8c8c8;box-sizing:border-box"></div>
<div style="left:352px;top:1038px;width:1px;height:6px;background:#505050"></div>
<div style="left:353px;top:1041px;width:48px;height:3px;background:#e8e8e8;border-top:1px solid #c8c8c8;box-sizing:border-box"></div>
<div style="left:402px;top:1038px;width:1px;height:6px;background:#505050"></div>
<div style="left:403px;top:1041px;width:48px;height:3px;background:#e8e8e8;border-top:1px solid #c8c8c8;box-sizing:border-box"></div>
<div style="left:452px;top:1038px;width:1px;height:6px;background:#505050"></div>
<div style="left:453px;top:1041px;width:48px;height:3px;background:#e8e8e8;border-top:1px solid #c8c8c8;box-sizing:border-box"></div>
<div style="left:502px;top:1038px;width:1px;height:6px;background:#505050"></div>
<div style="left:503px;top:1041px;width:48px;height:3px;background:#e8e8e8;border-top:1px solid #c8c8c8;box-sizing:border-box"></div>
<div style="left:552px;top:1038px;width:1px;height:6px;background:#505050"></div>
<div style="left:176px;top:1040px;width:14px;height:4px;background:#c02020"></div>
<div style="left:272px;top:1040px;width:14px;height:4px;background:#30a0a0"></div>
<div style="left:372px;top:1040px;width:14px;height:4px;background:#30a030"></div>
<div style="left:520px;top:1040px;width:14px;height:4px;background:#3060a0"></div>
<div style="left:1734px;top:1040px;width:182px;height:4px;background:#f8f8f8;border:1px solid #b0b0b0;border-bottom:0;box-sizing:border-box"></div>
</body></html>
